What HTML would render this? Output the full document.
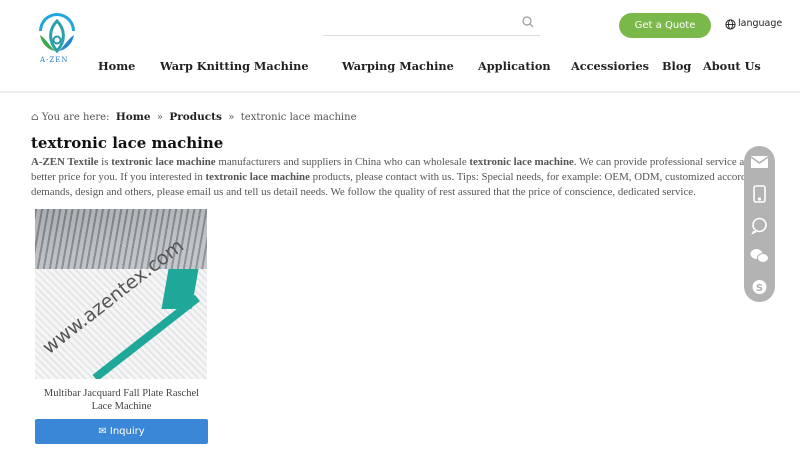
<!DOCTYPE html>
<html><head><meta charset="utf-8"><style>
*{margin:0;padding:0;box-sizing:border-box}
body{width:800px;height:450px;overflow:hidden;background:#fff;font-family:"DejaVu Serif","Liberation Serif",serif;position:relative;color:#222}
.a{position:absolute;white-space:nowrap}
.nav{font-weight:bold;font-size:11.3px;top:59px;color:#222}
p.t{font-family:"Liberation Serif",serif;font-size:10.9px;color:#555;line-height:15px}
</style></head><body>
<svg class="a" style="left:36px;top:13px" width="42" height="40" viewBox="0 0 42 40">
<path d="M3 18 A18 18 0 0 1 39 18 L36 18 A15 15 0 0 0 6 18 Z" fill="#1fa7e0"/>
<path d="M21 8 C13 16 12 28 21 38 C30 28 29 16 21 8 Z" fill="none" stroke="#2aa0a8" stroke-width="3"/>
<path d="M4 22 C6 32 13 37 19 38 C13 32 10 26 4 22 Z" fill="#3aaa4a"/>
<path d="M38 22 C36 32 29 37 23 38 C29 32 32 26 38 22 Z" fill="#2a86c8"/>
<circle cx="21" cy="27" r="3.5" fill="none" stroke="#2a9ab0" stroke-width="2"/>
</svg>
<div class="a" style="left:40px;top:56px;font-size:7px;color:#2a80c0;letter-spacing:1px">A-ZEN</div>
<div class="a" style="left:323px;top:35px;width:217px;height:1px;background:#ddd"></div>
<svg class="a" style="left:522px;top:16px" width="12" height="12" viewBox="0 0 12 12"><circle cx="5" cy="5" r="4" fill="none" stroke="#999" stroke-width="1.2"/><path d="M8 8 L11 11" stroke="#999" stroke-width="1.2"/></svg>
<div class="a" style="left:619px;top:13px;width:92px;height:25px;border-radius:13px;background:#7bb84a;color:#fff;font-family:'DejaVu Sans',sans-serif;font-size:10px;text-align:center;line-height:25px">Get a Quote</div>
<svg class="a" style="left:725px;top:19px" width="11" height="11" viewBox="0 0 12 12"><circle cx="6" cy="6" r="5" fill="none" stroke="#222" stroke-width="1.1"/><ellipse cx="6" cy="6" rx="2.2" ry="5" fill="none" stroke="#222"/><path d="M1 6H11" stroke="#222"/></svg>
<div class="a" style="left:738px;top:18px;font-family:'DejaVu Sans',sans-serif;font-size:9.5px;color:#222">language</div>
<div class="a nav" style="left:98px">Home</div>
<div class="a nav" style="left:160px">Warp Knitting Machine</div>
<div class="a nav" style="left:342px">Warping Machine</div>
<div class="a nav" style="left:478px">Application</div>
<div class="a nav" style="left:571px">Accessiories</div>
<div class="a nav" style="left:662px">Blog</div>
<div class="a nav" style="left:703px">About Us</div>
<div class="a" style="left:0;top:91px;width:800px;height:2px;background:#eee"></div>
<div class="a" style="left:31px;top:111px;font-size:10px;color:#555">&#8962; You are here:&nbsp; <b style="color:#222;font-size:10.5px">Home</b> &nbsp;»&nbsp; <b style="color:#222;font-size:10.5px">Products</b> &nbsp;»&nbsp; textronic lace machine</div>
<div class="a" style="left:31px;top:134px;font-size:15px;font-weight:bold;color:#111">textronic lace machine</div>
<div class="a" style="left:31px;top:155px;width:748px;white-space:normal"><p class="t"><b>A-ZEN Textile</b> is <b>textronic lace machine</b> manufacturers and suppliers in China who can wholesale <b>textronic lace machine</b>. We can provide professional service and better price for you. If you interested in <b>textronic lace machine</b> products, please contact with us. Tips: Special needs, for example: OEM, ODM, customized according to demands, design and others, please email us and tell us detail needs. We follow the quality of rest assured that the price of conscience, dedicated service.</p></div>
<div class="a" style="left:35px;top:209px;width:172px;height:170px;overflow:hidden;background:linear-gradient(170deg,#8a8f94 0%,#c9ccd0 25%,#e8eaec 45%,#f2f3f4 70%,#e6e8ea 100%)">
<div style="position:absolute;left:0;top:0;width:172px;height:60px;background:repeating-linear-gradient(100deg,#6d7378 0 2px,#b8bcc0 2px 6px);opacity:.7"></div>
<div style="position:absolute;left:0;top:60px;width:172px;height:110px;background:repeating-linear-gradient(45deg,#e4e6e8 0 2px,#f6f6f7 2px 5px)"></div>
<div style="position:absolute;left:130px;top:60px;width:30px;height:40px;background:#1fa89a;transform:skewX(-10deg)"></div>
<div style="position:absolute;left:60px;top:165px;width:130px;height:8px;background:#1fa89a;transform:rotate(-38deg);transform-origin:left"></div>
<div style="position:absolute;left:10px;top:130px;font-family:'DejaVu Sans',sans-serif;font-size:19px;color:#555;transform:rotate(-38deg);transform-origin:left">www.azentex.com</div>
</div>
<div class="a" style="left:33px;top:387px;width:177px;text-align:center;white-space:normal;font-family:'Liberation Serif',serif;font-size:10.5px;color:#444;line-height:13px">Multibar Jacquard Fall Plate Raschel Lace Machine</div>
<div class="a" style="left:35px;top:419px;width:173px;height:25px;background:#3a87d8;border-radius:2px;color:#fff;text-align:center;line-height:25px;font-family:'DejaVu Sans',sans-serif;font-size:10px">✉ Inquiry</div>
<div class="a" style="left:744px;top:146px;width:31px;height:156px;border-radius:16px;background:#b3b3b3"></div>
<svg class="a" style="left:744px;top:146px" width="31" height="156" viewBox="0 0 31 156" fill="none" stroke="#fff" stroke-width="1.6">
<rect x="7" y="10" width="17" height="12" fill="#fff" stroke="none"/><path d="M7 11 L15.5 17 L24 11" stroke="#b3b3b3"/>
<rect x="10" y="40" width="11" height="16" rx="2"/><circle cx="15.5" cy="53" r=".8" fill="#fff"/>
<circle cx="15.5" cy="79" r="6.5"/><path d="M10 85 L9 87 L12 85.5" fill="#fff"/>
<ellipse cx="12.5" cy="108" rx="6" ry="5" fill="#fff" stroke="none"/><ellipse cx="19" cy="112" rx="5.5" ry="4.5" fill="#fff" stroke="#b3b3b3" stroke-width="1"/>
<circle cx="15.5" cy="141" r="7" fill="#fff" stroke="none"/><text x="15.5" y="145" font-size="10" font-family="DejaVu Sans" font-weight="bold" text-anchor="middle" fill="#b3b3b3" stroke="none">S</text>
</svg>
</body></html>
